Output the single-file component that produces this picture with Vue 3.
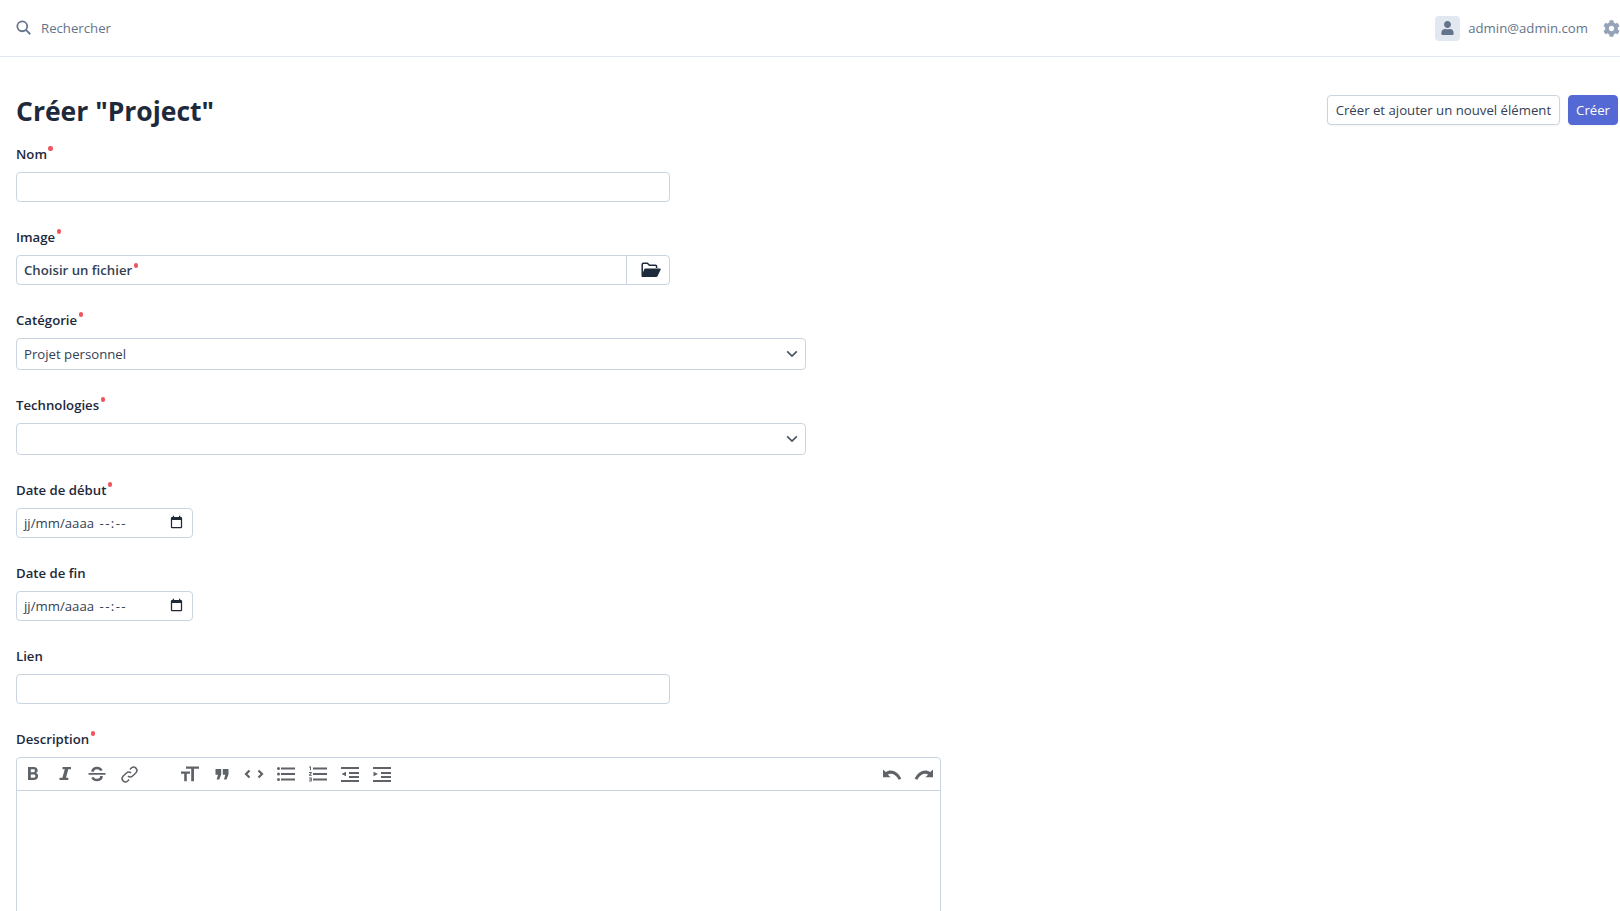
<script setup>
const firstTools = [
  { name: 'bold', d: 'M7 5h5.800c2.400 0 3.900 1.300 3.900 3.300 0 1.300-.7 2.200-1.700 2.700 1.300.4 2.100 1.500 2.100 3 0 2.400-1.800 4-4.500 4H7V5Zm2.800 2.300v2.900h2.500c1 0 1.600-.5 1.600-1.450 0-.95-.6-1.450-1.600-1.450H9.800Zm0 5.100v3.300h2.800c1.200 0 1.900-.6 1.900-1.650 0-1.050-.7-1.650-1.900-1.650H9.800Z' },
  { name: 'italic', d: 'M9.500 5H18v2.300h-2.700L13 15.700h2.300V18H6.500v-2.300h2.900l2.400-8.400H9.500V5Z' },
  { name: 'strike', d: 'M3.500 11h17v1.800h-17V11Zm2.900-1.300C6.100 7 8.500 4.700 12 4.700c2.900 0 5 1.400 5.600 3.500l-2.500.8c-.4-1.100-1.500-1.800-3.100-1.800-1.900 0-3.200.9-3 2.500H6.400Zm11.300 4.400c.5 2.900-2 5.200-5.600 5.200-3 0-5.200-1.400-5.800-3.600l2.500-.8c.4 1.200 1.600 1.900 3.300 1.900 2 0 3.200-.9 3-2.700h2.600Z' }
]
const listLines = 'M7 5.500h14v2H7zM7 11h14v2H7zM7 16.500h14v2H7z'
const indentLines = 'M3 5h18v2H3zM11 10h10v2H11zM11 14h10v2H11zM3 18h18v2H3z'
</script>

<template>
  <div class="page">
    <header class="topbar">
      <div class="search">
        <svg class="search-icon" viewBox="0 0 16 16"><circle cx="6.700" cy="6.700" r="5.300" /><path d="m10.600 10.600 4.600 4.600" /></svg>
        <span>Rechercher</span>
      </div>
      <div class="user">
        <span class="avatar">
          <svg viewBox="0 0 448 512"><path d="M224 256c70.700 0 128-57.300 128-128S294.700 0 224 0 96 57.300 96 128s57.300 128 128 128zm89.600 32h-16.700c-22.200 10.200-46.900 16-72.900 16s-50.600-5.800-72.900-16h-16.700C60.200 288 0 348.200 0 422.400V464c0 26.500 21.500 48 48 48h352c26.500 0 48-21.500 48-48v-41.600c0-74.200-60.200-134.400-134.400-134.400z"/></svg>
        </span>
        <span class="email">admin@admin.com</span>
        <svg class="gear" viewBox="0 0 512 512"><path d="M487.400 315.700l-42.600-24.600c4.300-23.200 4.300-47 0-70.200l42.600-24.600c4.900-2.800 7.100-8.600 5.500-14-11.100-35.600-30-67.800-54.700-94.600-3.800-4.100-10-5.100-14.800-2.300L380.800 110c-17.900-15.400-38.500-27.300-60.800-35.100V25.800c0-5.600-3.900-10.500-9.400-11.700-36.700-8.200-74.300-7.800-109.200 0-5.500 1.200-9.400 6.100-9.400 11.700V75c-22.200 7.900-42.800 19.800-60.800 35.100L88.700 85.500c-4.900-2.800-11-1.900-14.800 2.300-24.700 26.700-43.600 58.900-54.700 94.600-1.700 5.400.6 11.200 5.500 14L67.300 221c-4.300 23.200-4.300 47 0 70.200l-42.600 24.600c-4.900 2.800-7.100 8.600-5.500 14 11.100 35.600 30 67.800 54.700 94.600 3.800 4.100 10 5.100 14.800 2.300l42.600-24.600c17.900 15.400 38.500 27.300 60.800 35.100v49.200c0 5.600 3.900 10.500 9.400 11.700 36.700 8.200 74.300 7.800 109.200 0 5.500-1.200 9.400-6.100 9.400-11.700v-49.200c22.200-7.900 42.800-19.800 60.800-35.100l42.600 24.600c4.900 2.800 11 1.900 14.800-2.300 24.700-26.700 43.600-58.900 54.700-94.600 1.500-5.500-.7-11.300-5.600-14.100zM256 336c-44.100 0-80-35.900-80-80s35.900-80 80-80 80 35.900 80 80-35.900 80-80 80z"/></svg>
      </div>
    </header>

    <main class="content">
      <div class="title-row">
        <h1>Créer "Project"</h1>
        <div class="actions">
          <button class="btn">Créer et ajouter un nouvel élément</button>
          <button class="btn primary">Créer</button>
        </div>
      </div>

      <div class="field">
        <label class="req">Nom</label>
        <div class="input w-md"></div>
      </div>

      <div class="field">
        <label class="req">Image</label>
        <div class="input w-md file">
          <span class="file-name"><span class="req">Choisir un fichier</span></span>
          <span class="file-btn">
            <svg viewBox="0 0 20 16">
              <path class="folder-back" d="M1.200 13.500V2.500c0-.7.5-1.200 1.200-1.200h4l2 2h6c.7 0 1.200.5 1.200 1.200v1.500" />
              <path d="M4.500 6.500h14.300c.7 0 1.100.7.8 1.300l-3 6.300c-.3.6-.8.9-1.500.9H1.200c-.5 0-.8-.5-.6-1l2.500-6.400c.3-.7.800-1.100 1.400-1.100Z" />
            </svg>
          </span>
        </div>
      </div>

      <div class="field">
        <label class="req">Catégorie</label>
        <div class="input w-lg select">
          <span>Projet personnel</span>
          <svg class="chev" viewBox="0 0 16 16"><path d="m2.500 5 5.500 5.500L13.500 5" /></svg>
        </div>
      </div>

      <div class="field">
        <label class="req">Technologies</label>
        <div class="input w-lg select">
          <span></span>
          <svg class="chev" viewBox="0 0 16 16"><path d="m2.500 5 5.500 5.500L13.500 5" /></svg>
        </div>
      </div>

      <div class="field">
        <label class="req">Date de début</label>
        <div class="input w-sm date">
          <span>jj/mm/aaaa <span class="time">--:--</span></span>
          <svg class="cal" viewBox="0 0 24 24"><path d="M19 3h-1V1h-2v2H8V1H6v2H5a2 2 0 0 0-2 2v14a2 2 0 0 0 2 2h14a2 2 0 0 0 2-2V5a2 2 0 0 0-2-2Zm0 16H5V8h14v11Z"/></svg>
        </div>
      </div>

      <div class="field">
        <label>Date de fin</label>
        <div class="input w-sm date">
          <span>jj/mm/aaaa <span class="time">--:--</span></span>
          <svg class="cal" viewBox="0 0 24 24"><path d="M19 3h-1V1h-2v2H8V1H6v2H5a2 2 0 0 0-2 2v14a2 2 0 0 0 2 2h14a2 2 0 0 0 2-2V5a2 2 0 0 0-2-2Zm0 16H5V8h14v11Z"/></svg>
        </div>
      </div>

      <div class="field">
        <label>Lien</label>
        <div class="input w-md"></div>
      </div>

      <div class="field">
        <label class="req">Description</label>
        <div class="editor">
          <div class="toolbar">
            <div class="tool-group">
              <span v-for="t in firstTools" :key="t.name" class="tool">
                <svg viewBox="0 0 24 24"><path fill-rule="evenodd" :d="t.d" /></svg>
              </span>
              <span class="tool">
                <svg class="line link" viewBox="0 0 24 24"><path d="M10.200 13.800a3.700 3.700 0 0 0 5.300 0l3.900-3.900a3.750 3.750 0 0 0-5.300-5.300L12.400 6.300M13.800 10.200a3.700 3.700 0 0 0-5.300 0l-3.900 3.900a3.750 3.750 0 0 0 5.300 5.300l1.700-1.700" /></svg>
              </span>
            </div>
            <div class="tool-group">
              <span class="tool"><svg viewBox="0 0 24 24"><path d="M8 4.500h13v2.300h-5v12.500h-2.800V6.800H8V4.500ZM3 9.500h9v2.300H8.800v7.500H6.200v-7.500H3V9.500Z" /></svg></span>
              <span class="tool"><svg viewBox="0 0 24 24"><path d="M5.500 7h5.700v5.500l-2 5H6.700l1.300-4.800H5.500V7Zm7.300 0h5.700v5.500l-2 5H14l1.300-4.800h-2.500V7Z" /></svg></span>
              <span class="tool"><svg class="line thick" viewBox="0 0 24 24"><path d="M7.500 8.500 4 12l3.500 3.500M16.500 8.500 20 12l-3.500 3.500" /></svg></span>
              <span class="tool"><svg viewBox="0 0 24 24"><circle cx="4.500" cy="6.500" r="1.500" /><circle cx="4.500" cy="12" r="1.500" /><circle cx="4.500" cy="17.500" r="1.500" /><path :d="listLines" /></svg></span>
              <span class="tool"><svg viewBox="0 0 24 24"><path d="M3 4.500h2v3.800H4V5.500H3zM3 10h2.800v1l-1.500 1.700h1.500v1H3v-1l1.600-1.700H3zM3 15.500h2.800v4H3v-1h1.800v-.5H3.500v-.8h1.300v-.7H3z" /><path :d="listLines" /></svg></span>
              <span class="tool"><svg viewBox="0 0 24 24"><path :d="indentLines" /><path d="M8 8.800v4.400L3.500 11 8 8.800Z" transform="translate(0 1)" /></svg></span>
              <span class="tool"><svg viewBox="0 0 24 24"><path :d="indentLines" /><path d="M3.500 8.800v4.400L8 11 3.500 8.800Z" transform="translate(0 1)" /></svg></span>
            </div>
            <div class="tool-group end">
              <span class="tool"><svg class="arrow" viewBox="0 0 20 11"><path d="M1 .5v7.700h7.500L5.800 5.600C9 3.700 13.700 4.800 16.700 10.700l2.600-1C15.500 1.700 8.700-.4 3.700 3.100L1 .5Z" /></svg></span>
              <span class="tool"><svg class="arrow" viewBox="0 0 20 11"><path d="M19 .5v7.700h-7.500l2.700-2.600C11 3.700 6.300 4.800 3.300 10.700l-2.600-1C4.500 1.700 11.300-.4 16.300 3.100L19 .5Z" /></svg></span>
            </div>
          </div>
          <div class="editor-body"></div>
        </div>
      </div>
    </main>
  </div>
</template>

<style>
html, body { margin: 0; background: #fff; overflow: hidden; }
</style>

<style scoped>
.page {
  height: 911px;
  overflow: hidden;
  background: #fff;
  color: #334155;
  font-family: "Open Sans", "Noto Sans", "Liberation Sans", sans-serif;
  font-size: 13.2px;
}

.topbar {
  height: 57px;
  box-sizing: border-box;
  border-bottom: 1px solid #e2e8f0;
  display: flex;
  align-items: center;
  justify-content: space-between;
  padding-left: 16px;
}
.search { display: flex; align-items: center; gap: 10px; color: #64748b; }
.search-icon { width: 15px; height: 15px; fill: none; stroke: #64748b; stroke-width: 1.900; margin-top: -1px; }
.user { display: flex; align-items: center; }
.avatar {
  width: 25px;
  height: 25px;
  border-radius: 4px;
  background: #e2e8f0;
  display: flex;
  align-items: center;
  justify-content: center;
}
.avatar svg { width: 13px; height: 14px; fill: #64748b; }
.email { margin-left: 8px; color: #64748b; }
.gear { width: 17px; height: 17px; margin-left: 15px; fill: #94a3b8; }

.content { padding: 31px 2px 0 16px; }
.title-row { display: flex; align-items: center; justify-content: space-between; height: 46px; margin-bottom: 10px; }
h1 { margin: 0; font-size: 26.5px; font-weight: 700; color: #1e293b; }
.actions { display: flex; gap: 8px; margin-top: -3px; }
.btn {
  height: 30px;
  padding: 0 8px;
  border: 1px solid #cbd5e1;
  border-radius: 4px;
  background: #fff;
  color: #334155;
  font: inherit;
  box-shadow: 0 1px 2px rgba(0, 0, 0, .05);
}
.btn.primary { padding: 0 7px; background: #5469d4; border-color: #5469d4; color: #fff; }

.field { margin-bottom: 25px; }
label { display: block; font-weight: 600; line-height: 20px; margin-bottom: 8px; width: fit-content; color: #1e293b; }
.req { position: relative; display: inline-block; }
label.req { display: block; }
.req::after {
  content: "";
  position: absolute;
  right: -6px;
  top: 2px;
  width: 4.500px;
  height: 4.500px;
  border-radius: 50%;
  background: #ee5560;
}

.input {
  box-sizing: border-box;
  height: 30px;
  border: 1px solid #cbd5e1;
  border-radius: 4px;
  display: flex;
  align-items: center;
}
.w-md { width: 654px; }
.w-lg { width: 790px; height: 32px; }
.w-sm { width: 177px; }

.select, .date { justify-content: space-between; padding: 0 6px 0 7px; }
.date { padding-right: 8px; }
.time { letter-spacing: 1.400px; margin-left: 2px; }
.chev { width: 14px; height: 14px; fill: none; stroke: #4b5563; stroke-width: 1.900; }
.cal { width: 15px; height: 15px; fill: #1f2937; margin-top: -2px; }

.file { justify-content: space-between; }
.file-name { padding-left: 7px; font-weight: 600; color: #334155; }
.file-btn {
  box-sizing: border-box;
  width: 43px;
  height: 100%;
  padding-left: 6px;
  border-left: 1px solid #cbd5e1;
  display: flex;
  align-items: center;
  justify-content: center;
}
.file-btn svg { width: 20px; height: 16px; fill: #1e293b; }
.folder-back { fill: none; stroke: #1e293b; stroke-width: 1.500; }

.editor { width: 925px; border: 1px solid #cbd5e1; border-radius: 4px; box-sizing: border-box; }
.toolbar {
  height: 32px;
  border-bottom: 1px solid #cbd5e1;
  display: flex;
  align-items: center;
}
.tool-group { display: flex; align-items: center; margin-right: 29px; }
.tool-group.end { margin: 0 0 0 auto; }
.tool { width: 32px; height: 32px; display: flex; align-items: center; justify-content: center; }
.tool svg { width: 24px; height: 24px; fill: #5f6368; }
.tool svg.arrow { width: 20px; height: 11px; }
.tool svg.line { fill: none; stroke: #5f6368; stroke-width: 1.800; }
.tool svg.link { width: 21px; height: 21px; stroke-width: 1.700; }
.tool svg.thick { stroke-width: 2.200; }
.editor-body { height: 200px; }
</style>
